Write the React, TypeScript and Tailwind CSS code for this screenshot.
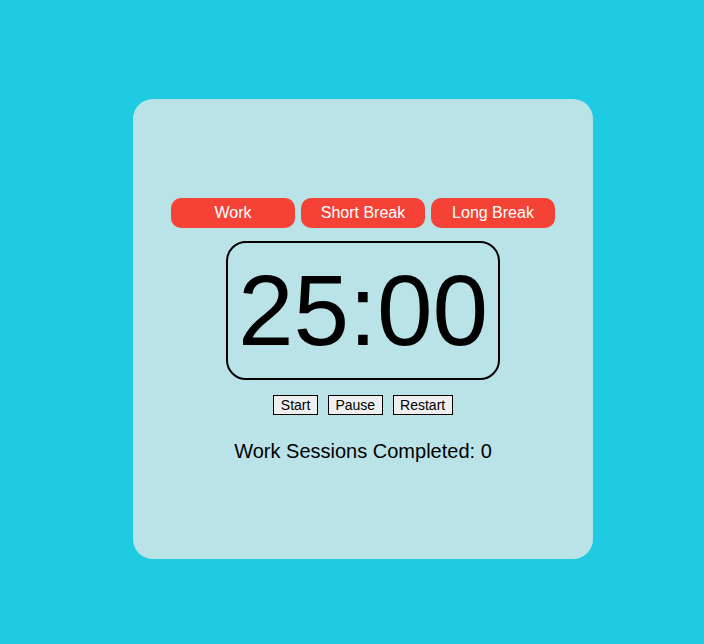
import { useState } from "react";

const modes = ["Work", "Short Break", "Long Break"];

export default function App() {
  const [sessions] = useState(0);

  return (
    <div
      className="min-h-screen w-full bg-[#1fcbe3] pl-[133px] pt-[99px]"
      style={{ fontFamily: '"Liberation Sans", Arial, sans-serif' }}
    >
      <div className="flex h-[460px] w-[460px] flex-col items-center rounded-[20px] bg-[#bae3e8] pt-[99px]">
        <div className="flex gap-[6px]">
          {modes.map((m) => (
            <button
              key={m}
              className="h-[30px] w-[124px] rounded-[10px] bg-[#f44336] text-[16px] text-white"
            >
              {m}
            </button>
          ))}
        </div>

        <div className="mt-[13px] rounded-[20px] border-2 border-black px-[10px] py-[10px] text-[100px] leading-[115px] text-black">
          25:00
        </div>

        <div className="mt-[15px] flex gap-[10px]">
          {["Start", "Pause", "Restart"].map((b) => (
            <button
              key={b}
              className="border border-black bg-[#efefef] px-[6.5px] py-[1px] text-[14px] leading-[16px] text-black"
            >
              {b}
            </button>
          ))}
        </div>

        <p className="mt-[25px] text-[20px] leading-[23px] text-black">
          Work Sessions Completed: {sessions}
        </p>
      </div>
    </div>
  );
}
